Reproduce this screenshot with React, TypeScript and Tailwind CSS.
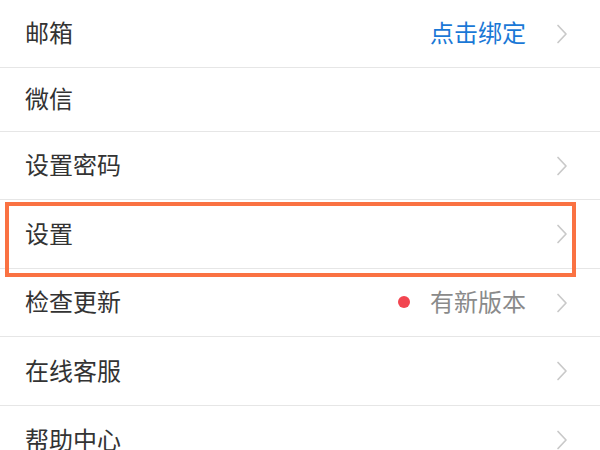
import React from 'react';

interface Row {
  label: string;
  height: string;
  value?: string;
  valueClass?: string;
  dot?: boolean;
  arrow?: boolean;
}

const rows: Row[] = [
  { label: '邮箱', height: 'h-[68px]', value: '点击绑定', valueClass: 'text-[#1a78d6]', arrow: true },
  { label: '微信', height: 'h-[64px]' },
  { label: '设置密码', height: 'h-[68px]', arrow: true },
  { label: '设置', height: 'h-[69px]', arrow: true },
  { label: '检查更新', height: 'h-[68px]', value: '有新版本', valueClass: 'text-[#8a8a8a]', dot: true, arrow: true },
  { label: '在线客服', height: 'h-[69px]', arrow: true },
  { label: '帮助中心', height: 'h-[69px]', arrow: true },
];

const Chevron = () => (
  <svg width="12" height="20" viewBox="0 0 12 20" fill="none" className="shrink-0 mt-[3px]">
    <path d="M2 1.5l8 8.5-8 8.5" stroke="#c9c9c9" strokeWidth="1.7" strokeLinecap="round" strokeLinejoin="round" />
  </svg>
);

const App: React.FC = () => {
  return (
    <div
      className="relative w-[600px] h-[450px] overflow-hidden bg-white"
      style={{ fontFamily: '"Noto Sans CJK SC", "Noto Sans", sans-serif' }}
    >
      {rows.map((row, index) => (
        <div
          key={index}
          className={`${row.height} flex items-center pl-[25px] pr-[32px] pb-[3px] border-b border-[#e6e6e6] bg-white`}
        >
          <span className="flex-1 text-[24px] leading-none text-[#333333]">{row.label}</span>
          {row.dot && <span className="w-[12px] h-[12px] rounded-full bg-[#f24550] mr-[20px] mt-[2px]" />}
          {row.value && (
            <span className={`text-[24px] leading-none ${row.valueClass}`}>{row.value}</span>
          )}
          <span className="w-[12px] ml-[30px] flex justify-center">
            {row.arrow && <Chevron />}
          </span>
        </div>
      ))}

      {/* highlight annotation */}
      <div className="absolute left-[5px] top-[202px] w-[571px] h-[75px] border-[4px] border-[#fa7242]" />
    </div>
  );
};

export default App;
